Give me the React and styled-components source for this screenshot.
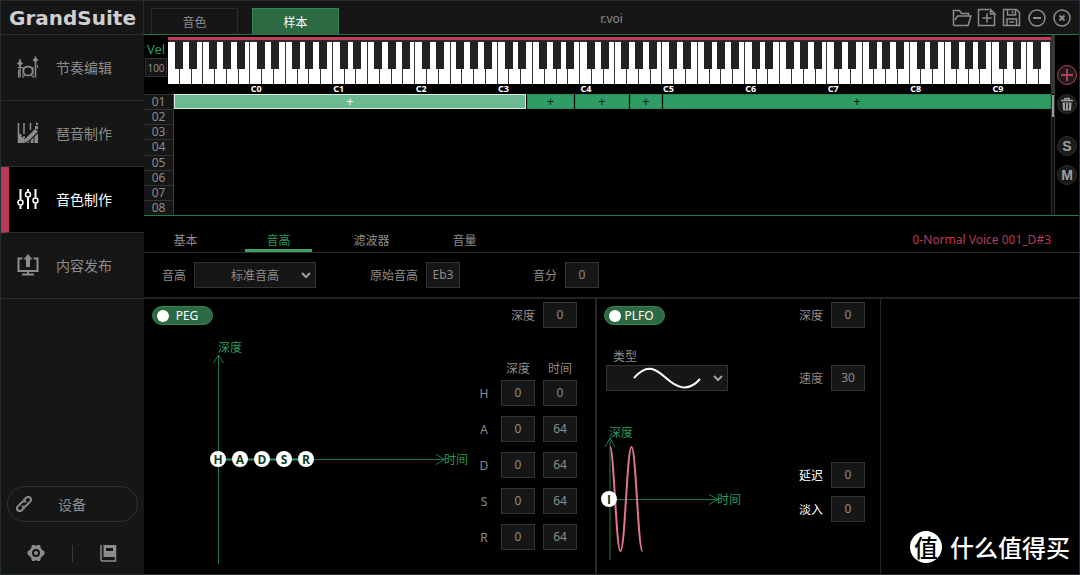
import React, { useState } from 'react';
import styled, { createGlobalStyle } from 'styled-components';

const palette = {
  page: '#000',
  panel: '#161616',
  line: '#2c2c2c',
  frame: '#262d31',
  text: '#8c8c8c',
  bright: '#fff',
  green: '#239a5f',
  greenLine: '#1b7a4b',
  greenFill: '#2c6a44',
  greenEdge: '#35854f',
  red: '#b93a57',
};

const GlobalStyle = createGlobalStyle`
  * {
    box-sizing: border-box;
  }
  body {
    margin: 0;
    background: ${palette.page};
  }
  body, button, input, select {
    font-family: 'Noto Sans', 'Noto Sans CJK SC', sans-serif;
    font-size: 12px;
    color: ${palette.text};
  }
  button {
    padding: 0;
    border: 0;
    background: none;
    cursor: pointer;
  }
  svg {
    display: block;
  }
`;

const AppBlock = styled.div`
  position: relative;
  display: grid;
  grid-template-columns: 143px minmax(0, 1fr);
  min-height: 100vh;
  border: 1px solid ${palette.frame};
`;

/* sidebar */
const Sidebar = styled.aside`
  display: flex;
  flex-direction: column;
  background: ${palette.panel};
`;
const Logo = styled.h1`
  margin: 0;
  height: 34px;
  padding-left: 8px;
  border-right: 1px solid ${palette.line};
  border-bottom: 1px solid ${palette.line};
  font-family: 'DejaVu Sans', sans-serif;
  font-size: 20px;
  font-weight: bold;
  line-height: 34px;
  color: #cfcfcf;
`;
const MenuItem = styled.button`
  display: flex;
  align-items: center;
  gap: 17px;
  width: 100%;
  height: 66px;
  padding-bottom: 2px;
  padding-left: ${(props) => (props.$active ? '8px' : '16px')};
  border-bottom: 1px solid ${palette.line};
  border-left: ${(props) => (props.$active ? `8px solid ${palette.red}` : '0')};
  background: ${(props) => (props.$active ? palette.page : palette.panel)};
  color: ${(props) => (props.$active ? palette.bright : palette.text)};
  font-size: 14px;
`;
const SidebarFooter = styled.div`
  margin-top: auto;
  padding: 0 6px 12px 6px;
`;
const DeviceButton = styled.button`
  display: flex;
  align-items: center;
  gap: 26px;
  width: 100%;
  height: 36px;
  padding-left: 8px;
  border: 1px solid #333;
  border-radius: 18px;
  font-size: 14px;
`;
const FooterIcons = styled.div`
  display: flex;
  align-items: center;
  justify-content: space-between;
  margin-top: 22px;
  padding: 0 21px 0 20px;
`;
const FooterDivider = styled.span`
  width: 1px;
  height: 17px;
  background: #3a3a3a;
`;

/* header */
const Main = styled.main`
  display: flex;
  flex-direction: column;
`;
const Header = styled.header`
  display: grid;
  grid-template-columns: 1fr auto 1fr;
  grid-template-rows: 33px;
  border-bottom: 1px solid ${palette.greenLine};
  background: ${palette.panel};
`;
const TabGroup = styled.div`
  display: flex;
  align-items: flex-end;
  gap: 14px;
  padding-left: 7px;
`;
const HeaderTab = styled.button`
  width: 87px;
  height: 26px;
  border: 1px solid ${(props) => (props.$active ? palette.greenEdge : palette.line)};
  border-bottom: 0;
  background: ${(props) => (props.$active ? palette.greenFill : palette.panel)};
  color: ${(props) => (props.$active ? palette.bright : palette.text)};
`;
const FileName = styled.span`
  line-height: 35px;
`;
const WindowTools = styled.div`
  display: flex;
  align-items: center;
  justify-content: flex-end;
  gap: 5px;
  padding-right: 7px;
`;

/* key map */
const KeyMap = styled.section`
  display: grid;
  grid-template-columns: minmax(0, 1fr) 4px 24px;
  border-bottom: 1px solid ${palette.greenLine};
`;
const KeyboardRow = styled.div`
  display: grid;
  grid-template-columns: 24px minmax(0, 1fr);
  height: 59px;
  padding-top: 2px;
`;
const VelocityField = styled.label`
  display: flex;
  flex-direction: column;
  align-items: center;
  padding: 4px 1px 0;
  font-size: 13px;
  line-height: 16px;
  color: ${palette.green};
  input {
    width: 22px;
    height: 19px;
    margin-top: 1px;
    padding: 0;
    border: 1px solid #333;
    background: ${palette.panel};
    font-size: 10px;
    text-align: center;
  }
`;
const Keyboard = styled.div`
  position: relative;
  display: grid;
  grid-template-columns: repeat(75, minmax(0, 1fr));
  height: 47px;
  border-top: 3px solid #c23c57;
  background: #2b2b2b;
`;
const WhiteKey = styled.span`
  margin-top: 2px;
  border-right: 1px solid #333;
  background: #fff;
`;
const BlackKey = styled.span`
  position: absolute;
  top: 1px;
  width: 8px;
  height: 28px;
  background: #222;
`;
const OctaveLabels = styled.div`
  display: grid;
  grid-template-columns: repeat(75, minmax(0, 1fr));
  font-size: 9px;
  font-weight: bold;
  line-height: 10px;
  color: ${palette.bright};
`;
const OctaveLabel = styled.span`
  grid-row: 1;
  grid-column: ${(props) => props.$column};
  justify-self: center;
`;
const Lanes = styled.div`
  display: grid;
  grid-template-columns: 30px minmax(0, 1fr);
  height: 121px;
`;
const LaneNumbers = styled.ol`
  display: grid;
  grid-template-rows: repeat(8, minmax(0, 1fr));
  margin: 0;
  padding: 0;
  border-right: 1px solid #3a3a3a;
  background: ${palette.panel};
  list-style: none;
  li {
    border-top: 1px solid #333;
    line-height: 14px;
    text-align: center;
  }
`;
const LaneBars = styled.div`
  display: grid;
  grid-template-columns: 352fr 47fr 54fr 32fr 388fr;
  gap: 1px;
  height: 15px;
`;
const LaneBar = styled.button`
  border: 1px solid ${(props) => (props.$active ? '#d6efe1' : '#278a57')};
  background: ${(props) => (props.$active ? '#6dba92' : '#2e9d65')};
  color: ${(props) => (props.$active ? palette.bright : '#02150b')};
  line-height: 12px;
`;
const ScrollTrack = styled.div`
  padding-top: 60px;
  border: solid #333;
  border-width: 0 1px;
  background: linear-gradient(#3a3a3a 59px, #0c0c0c 59px);
`;
const ScrollThumb = styled.div`
  height: 22px;
  background: #999;
`;
const Rail = styled.div`
  display: flex;
  flex-direction: column;
  align-items: center;
  gap: 9px;
  padding-top: 30px;
`;
const RailButton = styled.button`
  display: flex;
  align-items: center;
  justify-content: center;
  width: 20px;
  height: 20px;
  margin-top: ${(props) => (props.$spaced ? '13px' : '0')};
  border: 1px solid ${(props) => (props.$accent ? palette.red : '#2e2e2e')};
  border-radius: 50%;
  background: #1c1c1c;
  color: ${(props) => (props.$accent ? palette.red : '#a0a0a0')};
  font-family: 'Liberation Sans', sans-serif;
  font-size: 14px;
  font-weight: bold;
`;

/* section tabs and pitch form */
const SectionTabs = styled.nav`
  display: flex;
  gap: 26px;
  height: 37px;
  padding: 0 28px 0 8px;
  border-bottom: 1px solid ${palette.line};
`;
const SectionTab = styled.button`
  width: 67px;
  padding-top: 15px;
  border-bottom: 3px solid ${(props) => (props.$active ? '#45a067' : 'transparent')};
  color: ${(props) => (props.$active ? palette.green : palette.text)};
`;
const SampleName = styled.span`
  margin-left: auto;
  line-height: 48px;
  color: ${palette.red};
`;
const PitchForm = styled.form`
  display: flex;
  align-items: center;
  height: 46px;
  padding-left: 18px;
  border-bottom: 2px solid #232323;
`;
const Field = styled.label`
  display: flex;
  align-items: center;
  gap: 8px;
  margin-right: ${(props) => props.$after || '0'};
  color: ${(props) => (props.$bright ? palette.bright : palette.text)};
`;
const ValueInput = styled.input`
  width: 34px;
  height: 26px;
  padding: 0 0 1px;
  border: 1px solid #333;
  border-radius: 0;
  background: ${palette.panel};
  text-align: center;
`;
const SelectBox = styled.span`
  position: relative;
  display: block;
  width: 122px;
  height: 26px;
  select {
    width: 100%;
    height: 100%;
    padding: 0 20px;
    appearance: none;
    border: 1px solid #333;
    border-radius: 0;
    background: ${palette.panel};
    text-align-last: center;
  }
  svg {
    position: absolute;
    inset: 0;
    pointer-events: none;
  }
`;

/* envelope and LFO panels */
const Panels = styled.div`
  display: grid;
  flex: 1;
  grid-template-columns: minmax(0, 453fr) minmax(0, 284fr) minmax(0, 198fr);
`;
const Panel = styled.section`
  display: flex;
  justify-content: space-between;
  padding: ${(props) => (props.$wide ? '3px 18px 0 8px' : '3px 15px 0 7px')};
  border-right: ${(props) => (props.$wide ? '2px' : '1px')} solid #262626;
`;
const PanelColumn = styled.div`
  display: flex;
  flex-direction: column;
  align-items: ${(props) => (props.$end ? 'flex-end' : 'flex-start')};
`;
const Toggle = styled.label`
  display: flex;
  align-items: center;
  width: 61px;
  height: 19px;
  margin-top: 4px;
  padding: 0 7px 0 4px;
  border: 1px solid ${palette.greenEdge};
  border-radius: 10px;
  background: ${palette.greenFill};
  color: ${palette.bright};
  input {
    flex: none;
    width: 12px;
    height: 12px;
    margin: 0;
    appearance: none;
    border-radius: 50%;
    background: #fff;
  }
  span {
    flex: 1;
    text-align: center;
  }
`;
const StageTable = styled.table`
  margin-top: 28px;
  border-collapse: collapse;
  th {
    padding: 0;
    font-weight: normal;
  }
  thead th {
    height: 24px;
    padding: 0 0 0 8px;
  }
  tbody th {
    width: 18px;
    padding-bottom: 10px;
  }
  tbody td {
    height: 36px;
    padding: 0 0 10px 8px;
  }
  input {
    display: block;
  }
`;
const WaveField = styled.label`
  display: flex;
  flex-direction: column;
  margin: 24px 0 30px 2px;
  line-height: 16px;
  > span:first-child {
    padding-left: 7px;
  }
`;
const FieldStack = styled.div`
  display: flex;
  flex-direction: column;
  ${Field}:nth-child(2) {
    margin-top: 37px;
  }
  ${Field}:nth-child(3) {
    margin-top: 71px;
  }
  ${Field}:nth-child(4) {
    margin-top: 8px;
  }
`;
const Graph = styled.svg`
  overflow: visible;
  text {
    font-size: 12px;
    fill: ${palette.green};
  }
  .node {
    font-family: 'Open Sans', sans-serif;
    font-weight: bold;
    text-anchor: middle;
    fill: #0b3a20;
  }
`;
const Watermark = styled.div`
  position: absolute;
  right: 9px;
  bottom: 10px;
  display: flex;
  align-items: center;
  gap: 8px;
  font-family: 'Noto Sans CJK SC', sans-serif;
  font-size: 24px;
  font-weight: 500;
  line-height: 34px;
  color: ${palette.bright};
`;
const WatermarkBadge = styled.span`
  width: 32px;
  height: 32px;
  border-radius: 50%;
  background: #fff;
  color: #000;
  line-height: 31px;
  text-align: center;
`;

const Icon = ({ size = 20, box = 20, children }) => (
  <svg
    width={size}
    height={size}
    viewBox={`0 0 ${box} ${box}`}
    fill="none"
    stroke="currentColor"
    strokeWidth="1.5"
    aria-hidden="true"
  >
    {children}
  </svg>
);

const DrumIcon = () => (
  <Icon size={22} box={22}>
    <circle cx="11" cy="15" r="4.500" />
    <path d="M3 3v18.500M18.500 0.500v21" />
    <path d="M6 11v10.500M16 11v10.500" strokeWidth="1" />
    <path d="M6 12.500q5-4 10 0" />
    <path d="m3 4.500 3 3-3 2.500-3-2.500zM18.500 1.500l3 2.500-3 2.500-3-2.500z" fill="currentColor" stroke="none" />
    <path d="M1.500 14v7.500M20.500 9v3M1 11.500h5M8 19l-2 2.500M14 19l2 2.500" strokeWidth="1" />
  </Icon>
);
const ArpIcon = () => (
  <Icon size={22} box={22}>
    <path d="M1.500 1v20M7 1v11M13.500 1v7M7 14v7" />
    <path d="M1 12h3.500v3l2.500 1v5H1z" fill="currentColor" stroke="none" />
    <path d="m8 17 10-10 3 2.500L11.500 19 7.500 20.500z" fill="currentColor" stroke="none" />
    <path d="M13.500 21v-2.500l3-3V21zM17.500 21v-6.500l3.500-3V21zM18 4h3v3h-3zM19 1h2v2h-2zM8 21l4-1v1z" fill="currentColor" stroke="none" />
  </Icon>
);
const MixIcon = () => (
  <Icon size={22} box={22}>
    <path d="M3.500 1v10.500M3.500 17.500v3.500M11 1v2.500M11 9.500V21M18.500 1v8.500M18.500 15.500V21" strokeWidth="2" />
    <circle cx="3.500" cy="14.500" r="2.500" />
    <circle cx="11" cy="6.500" r="2.500" />
    <circle cx="18.500" cy="12.500" r="2.500" />
  </Icon>
);
const PublishIcon = () => (
  <Icon size={22} box={22}>
    <path d="M5.500 4.500h-4v12.500h19V4.500h-4" strokeWidth="2" />
    <path d="M11 4v9" strokeWidth="4" />
    <path d="M11 0 6.500 5.500h9z" fill="currentColor" stroke="none" />
    <path d="M11 17v3M5 20.500h12" strokeWidth="2" />
  </Icon>
);
const LinkIcon = () => (
  <Icon size={16} box={16}>
    <g strokeWidth="2">
      <path d="m7.500 4.500 2.800-2.800a2.700 2.700 0 0 1 3.900 3.900L9.800 10a2.700 2.700 0 0 1-3.900 0" />
      <path d="m8.500 11.500-2.800 2.800a2.700 2.700 0 0 1-3.900-3.900L6.200 6a2.700 2.700 0 0 1 3.900 0" />
    </g>
  </Icon>
);
const GearIcon = () => (
  <Icon size={18} box={18}>
    <path
      d="M5 1h2.500l1.500 1 1.500-1H13l1 3.500 1.500 1.500 2 1.500v3L15.500 12 14 13.500 13 17h-2.500L9 16l-1.500 1H5l-1-3.500L2.500 12l-2-1.500v-3l2-1.500L4 4.500z"
      fill="currentColor"
      stroke="none"
    />
    <circle cx="9" cy="9" r="3" stroke={palette.panel} strokeWidth="2" />
  </Icon>
);
const BookIcon = () => (
  <Icon size={18} box={18}>
    <path d="M2 1v14.500q0 1.500 1.500 1.500h13V1" />
    <path d="M4 1h13v12H4z" fill="currentColor" stroke="none" />
    <path d="M7 5.500h7" stroke={palette.panel} strokeWidth="3" />
    <path d="M4 1v12" stroke={palette.panel} strokeWidth="1" />
  </Icon>
);
const FolderIcon = () => (
  <Icon>
    <path d="M1.500 17.500v-15h6l2 3h7v2.500M1.500 17.500h14.500l3-9.500H5.500L3 12" />
  </Icon>
);
const NewIcon = () => (
  <Icon>
    <path d="M12 1.500H1.500v16h16V7M13.500 1.500V6H18zM10 5.500v9M5.500 10h9" />
  </Icon>
);
const SaveIcon = () => (
  <Icon>
    <path d="M1.500 1.500h13l3 3v13h-16zM5.500 1.500V7h8V1.500M5 17.500V11h9.500v6.500M10.500 3v2.500M7.500 14H12" />
  </Icon>
);
const MinimizeIcon = () => (
  <Icon>
    <circle cx="10" cy="10" r="8" />
    <path d="M6 10h8" strokeWidth="2" />
  </Icon>
);
const CloseIcon = () => (
  <Icon>
    <circle cx="10" cy="10" r="8" />
    <path d="m7.500 7.500 5 5M12.500 7.500l-5 5" strokeWidth="2" />
  </Icon>
);
const PlusIcon = () => (
  <Icon size={14} box={14}>
    <path d="M7 1v12M1 7h12" strokeWidth="2" />
  </Icon>
);
const TrashIcon = () => (
  <Icon size={14} box={14}>
    <path d="M1 3.500h12M5 3V1.500h4V3" />
    <path d="M2.500 5.500h9L11 13.500H3z" fill="currentColor" stroke="none" />
    <path d="M5.500 6v6.500M8.500 6v6.500" stroke="#1c1c1c" strokeWidth="1" />
  </Icon>
);

const menus = [
  { name: '节奏编辑', icon: <DrumIcon /> },
  { name: '琶音制作', icon: <ArpIcon /> },
  { name: '音色制作', icon: <MixIcon /> },
  { name: '内容发布', icon: <PublishIcon /> },
];
const windowTools = [
  ['open', <FolderIcon />],
  ['new', <NewIcon />],
  ['save', <SaveIcon />],
  ['minimize', <MinimizeIcon />],
  ['close', <CloseIcon />],
];
const stages = [
  ['H', 0, 0],
  ['A', 0, 64],
  ['D', 0, 64],
  ['S', 0, 64],
  ['R', 0, 64],
];

// 128 MIDI notes: 75 white keys, black keys sit on the semitone grid
const blackNotes = Array.from({ length: 128 }, (_, note) => note).filter((note) =>
  [1, 3, 6, 8, 10].includes(note % 12),
);
const blackKeyLeft = (note) => `${((note * 7) / 12 / 75) * 100}%`;

const Chevron = ({ children }) => (
  <svg width="122" height="26" fill="none" aria-hidden="true">
    {children}
    <path d="m108 11 4 4 4-4" stroke="#a0a0a0" strokeWidth="2" />
  </svg>
);

const Piano = () => (
  <Keyboard>
    {Array.from({ length: 75 }, (_, i) => (
      <WhiteKey key={i} />
    ))}
    {blackNotes.map((note) => (
      <BlackKey key={note} style={{ left: blackKeyLeft(note) }} />
    ))}
  </Keyboard>
);

const Node = ({ x, y, children }) => (
  <g>
    <circle cx={x} cy={y} r="8" fill="#fff" />
    <text className="node" x={x} y={y + 5}>
      {children}
    </text>
  </g>
);

const EnvelopeGraph = () => (
  <Graph width="318" height="240" fill="none" stroke="none">
    <path d="M66.500 30v209M61.500 38l5-8 5 8M66 134.500h227M284 129.500l9 5-9 5" stroke={palette.greenLine} />
    <path d="M66 134.500h88" stroke={palette.green} strokeWidth="2" />
    <text x="66" y="27">深度</text>
    <text x="292" y="139">时间</text>
    {stages.map(([stage], i) => (
      <Node key={stage} x={66 + i * 22} y={134}>
        {stage}
      </Node>
    ))}
  </Graph>
);

const LfoGraph = () => (
  <Graph width="138" height="140" fill="none" stroke="none">
    <path d="M6 17v122M1 26l5-9 5 9M6 78.500h108M105 73.500l9 5-9 5" stroke={palette.greenLine} />
    <path
      d="M6 26C10 26 12 130 16.500 130S23 26 27.500 26 34 130 38.500 130"
      stroke="#e0758c"
      strokeWidth="2"
    />
    <text x="5" y="16">深度</text>
    <text x="113" y="83">时间</text>
    <Node x={5} y={78}>
      I
    </Node>
  </Graph>
);

const App = () => {
  const [menu, setMenu] = useState('音色制作');
  const [tab, setTab] = useState('样本');
  const [section, setSection] = useState('音高');
  const [bar, setBar] = useState(0);

  return (
    <AppBlock>
      <GlobalStyle />
      <Sidebar>
        <Logo>GrandSuite</Logo>
        {menus.map(({ name, icon }) => (
          <MenuItem key={name} $active={menu === name} onClick={() => setMenu(name)}>
            {icon}
            {name}
          </MenuItem>
        ))}
        <SidebarFooter>
          <DeviceButton>
            <LinkIcon />
            设备
          </DeviceButton>
          <FooterIcons>
            <button aria-label="settings">
              <GearIcon />
            </button>
            <FooterDivider />
            <button aria-label="manual">
              <BookIcon />
            </button>
          </FooterIcons>
        </SidebarFooter>
      </Sidebar>
      <Main>
        <Header>
          <TabGroup>
            {['音色', '样本'].map((name) => (
              <HeaderTab key={name} $active={tab === name} onClick={() => setTab(name)}>
                {name}
              </HeaderTab>
            ))}
          </TabGroup>
          <FileName>r.voi</FileName>
          <WindowTools>
            {windowTools.map(([name, icon]) => (
              <button key={name} aria-label={name}>
                {icon}
              </button>
            ))}
          </WindowTools>
        </Header>
        <KeyMap>
          <div>
            <KeyboardRow>
              <VelocityField>
                Vel
                <input defaultValue="100" />
              </VelocityField>
              <div>
                <Piano />
                <OctaveLabels>
                  {Array.from({ length: 10 }, (_, i) => (
                    <OctaveLabel key={i} $column={i * 7 + 8}>
                      C{i}
                    </OctaveLabel>
                  ))}
                </OctaveLabels>
              </div>
            </KeyboardRow>
            <Lanes>
              <LaneNumbers>
                {Array.from({ length: 8 }, (_, i) => (
                  <li key={i}>0{i + 1}</li>
                ))}
              </LaneNumbers>
              <LaneBars>
                {[0, 1, 2, 3, 4].map((i) => (
                  <LaneBar key={i} $active={bar === i} onClick={() => setBar(i)}>
                    +
                  </LaneBar>
                ))}
              </LaneBars>
            </Lanes>
          </div>
          <ScrollTrack>
            <ScrollThumb />
          </ScrollTrack>
          <Rail>
            <RailButton $accent aria-label="add">
              <PlusIcon />
            </RailButton>
            <RailButton aria-label="delete">
              <TrashIcon />
            </RailButton>
            <RailButton $spaced>S</RailButton>
            <RailButton>M</RailButton>
          </Rail>
        </KeyMap>
        <SectionTabs>
          {['基本', '音高', '滤波器', '音量'].map((name) => (
            <SectionTab key={name} $active={section === name} onClick={() => setSection(name)}>
              {name}
            </SectionTab>
          ))}
          <SampleName>0-Normal Voice 001_D#3</SampleName>
        </SectionTabs>
        <PitchForm>
          <Field $after="54px">
            音高
            <SelectBox>
              <select>
                <option>标准音高</option>
              </select>
              <Chevron />
            </SelectBox>
          </Field>
          <Field $after="73px">
            原始音高
            <ValueInput defaultValue="Eb3" />
          </Field>
          <Field>
            音分
            <ValueInput defaultValue="0" />
          </Field>
        </PitchForm>
        <Panels>
          <Panel $wide>
            <PanelColumn>
              <Toggle>
                <input type="checkbox" defaultChecked />
                <span>PEG</span>
              </Toggle>
              <EnvelopeGraph />
            </PanelColumn>
            <PanelColumn $end>
              <Field>
                深度
                <ValueInput defaultValue="0" />
              </Field>
              <StageTable>
                <thead>
                  <tr>
                    <td />
                    <th scope="col">深度</th>
                    <th scope="col">时间</th>
                  </tr>
                </thead>
                <tbody>
                  {stages.map(([stage, depth, time]) => (
                    <tr key={stage}>
                      <th scope="row">{stage}</th>
                      <td>
                        <ValueInput aria-label={`${stage} 深度`} defaultValue={depth} />
                      </td>
                      <td>
                        <ValueInput aria-label={`${stage} 时间`} defaultValue={time} />
                      </td>
                    </tr>
                  ))}
                </tbody>
              </StageTable>
            </PanelColumn>
          </Panel>
          <Panel>
            <PanelColumn>
              <Toggle>
                <input type="checkbox" defaultChecked />
                <span>PLFO</span>
              </Toggle>
              <WaveField>
                <span>类型</span>
                <SelectBox>
                  <select>
                    <option value="sine" aria-label="sine" />
                  </select>
                  <Chevron>
                    <path d="M28 13C42-3 51 5 60 13s21 16 34 1" stroke="#fff" strokeWidth="2" />
                  </Chevron>
                </SelectBox>
              </WaveField>
              <LfoGraph />
            </PanelColumn>
            <FieldStack>
              <Field>
                深度
                <ValueInput defaultValue="0" />
              </Field>
              <Field>
                速度
                <ValueInput defaultValue="30" />
              </Field>
              <Field $bright>
                延迟
                <ValueInput defaultValue="0" />
              </Field>
              <Field $bright>
                淡入
                <ValueInput defaultValue="0" />
              </Field>
            </FieldStack>
          </Panel>
        </Panels>
      </Main>
      <Watermark>
        <WatermarkBadge>值</WatermarkBadge>
        什么值得买
      </Watermark>
    </AppBlock>
  );
};

export default App;
